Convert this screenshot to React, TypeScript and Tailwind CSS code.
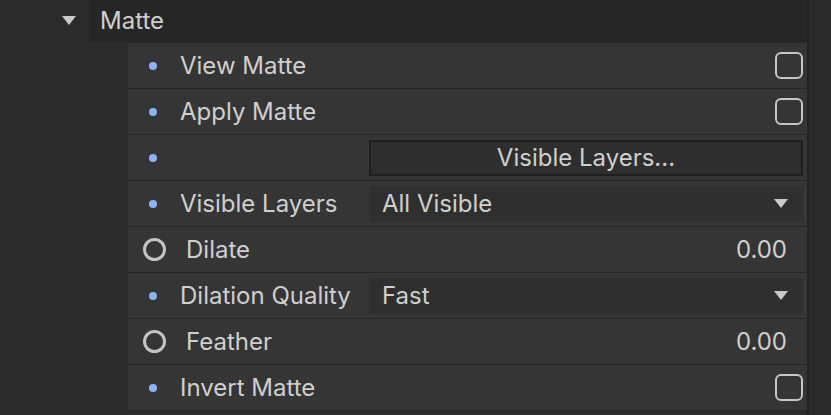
import React from 'react';

type Row =
  | { kind: 'check'; label: string; marker: 'dot' | 'ring' }
  | { kind: 'button'; label: string; marker: 'dot' | 'ring'; text: string }
  | { kind: 'select'; label: string; marker: 'dot' | 'ring'; value: string }
  | { kind: 'number'; label: string; marker: 'dot' | 'ring'; value: string };

const rows: Row[] = [
  { kind: 'check', label: 'View Matte', marker: 'dot' },
  { kind: 'check', label: 'Apply Matte', marker: 'dot' },
  { kind: 'button', label: '', marker: 'dot', text: 'Visible Layers...' },
  { kind: 'select', label: 'Visible Layers', marker: 'dot', value: 'All Visible' },
  { kind: 'number', label: 'Dilate', marker: 'ring', value: '0.00' },
  { kind: 'select', label: 'Dilation Quality', marker: 'dot', value: 'Fast' },
  { kind: 'number', label: 'Feather', marker: 'ring', value: '0.00' },
  { kind: 'check', label: 'Invert Matte', marker: 'dot' },
];

function Caret() {
  return (
    <svg width="14" height="9" viewBox="0 0 14 9" className="shrink-0">
      <path d="M0 0 H14 L7 9 Z" fill="#c9c9c9" />
    </svg>
  );
}

function Marker({ type }: { type: 'dot' | 'ring' }) {
  if (type === 'ring') {
    return (
      <div className="ml-[15px] w-[43px] shrink-0 flex items-center">
        <div className="w-[23px] h-[23px] rounded-full border-[3px] border-[#c4c4c4]" />
      </div>
    );
  }
  return (
    <div className="ml-[21px] w-[31px] shrink-0 flex items-center">
      <div className="w-[8px] h-[8px] rounded-full bg-[#8ab4fb]" />
    </div>
  );
}

function PropertyRow({ row }: { row: Row }) {
  return (
    <div className="h-[45px] bg-[#353535] flex items-center">
      <Marker type={row.marker} />
      <div
        className={
          row.marker === 'ring'
            ? 'flex-1 whitespace-nowrap'
            : 'w-[189px] shrink-0 whitespace-nowrap'
        }
      >
        {row.label}
      </div>
      {row.kind === 'check' && (
        <div className="ml-auto mr-[4px] w-[28px] h-[27px] rounded-[6px] border-2 border-[#c6c6c6]" />
      )}
      {row.kind === 'button' && (
        <div className="flex-1 mr-[4px] h-[36px] border-2 border-[#1f1f1f] bg-[#2e2e2e] flex items-center justify-center">
          {row.text}
        </div>
      )}
      {row.kind === 'select' && (
        <div className="flex-1 mr-[4px] h-[36px] bg-[#2f2f2f] flex items-center pl-[13px] pr-[15px]">
          <span className="flex-1">{row.value}</span>
          <Caret />
        </div>
      )}
      {row.kind === 'number' && (
        <div className="ml-auto mr-[20px]">{row.value}</div>
      )}
    </div>
  );
}

export default function App() {
  return (
    <div
      className="w-[831px] h-[415px] bg-[#2b2b2b] flex text-[#cfcfcf] text-[24px] leading-[30px] overflow-hidden"
      style={{ fontFamily: 'Inter, "Noto Sans", sans-serif' }}
    >
      <div className="w-[807px] shrink-0 flex flex-col">
        {/* Group header */}
        <div className="h-[42px] flex shrink-0">
          <div className="w-[89px] shrink-0 flex items-center pl-[62px] pb-[2px]">
            <Caret />
          </div>
          <div className="flex-1 bg-[#262626] flex items-center pl-[11px]">
            Matte
          </div>
        </div>

        {/* Properties */}
        <div className="ml-[128px] mt-px flex flex-col gap-px bg-[#262626] pb-px">
          {rows.map((row, i) => (
            <PropertyRow key={i} row={row} />
          ))}
        </div>
      </div>
      <div className="flex-1 border-l-2 border-[#222222] bg-[#2a2a2a]" />
    </div>
  );
}
